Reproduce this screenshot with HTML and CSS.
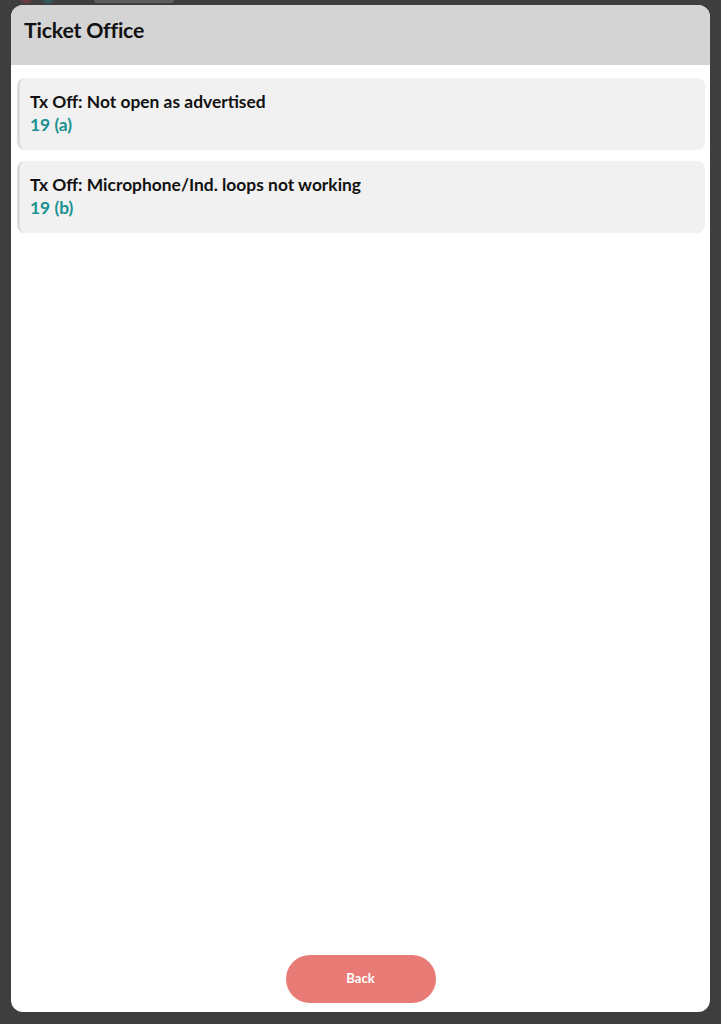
FILE: index.html
```html
<!DOCTYPE html>
<html>
<head>
<meta charset="utf-8">
<link rel="stylesheet" href="styles.css">
</head>
<body>
<div class="backdrop-peek">
  <span class="peek-dot red"></span>
  <span class="peek-dot teal"></span>
  <span class="peek-bar"></span>
</div>
<div class="modal">
  <div class="modal-header">
    <h1 class="modal-title">Ticket Office</h1>
  </div>
  <div class="modal-body">
    <div class="item-card">
      <div class="item-title">Tx Off: Not open as advertised</div>
      <div class="item-code">19 (a)</div>
    </div>
    <div class="item-card">
      <div class="item-title">Tx Off: Microphone/Ind. loops not working</div>
      <div class="item-code">19 (b)</div>
    </div>
  </div>
  <div class="modal-footer">
    <button class="back-btn">Back</button>
  </div>
</div>
</body>
</html>
```
FILE: styles.css
```css
* { box-sizing: border-box; }
html, body { margin: 0; padding: 0; }
body {
  background: #3e3e3e;
  font-family: Lato, "Open Sans", sans-serif;
  height: 1024px;
  overflow: hidden;
  position: relative;
  padding: 5px 11px 12px 11px;
}
.backdrop-peek {
  position: absolute;
  top: -8px;
  left: 20px;
  display: flex;
  align-items: center;
  gap: 30px;
  opacity: 0.3;
}
.peek-dot { width: 12px; height: 12px; border-radius: 50%; }
.peek-dot.red { background: #c0394a; }
.peek-dot.teal { background: #1a8f8f; margin-left: -20px; }
.peek-bar { width: 80px; height: 10px; border-radius: 3px; background: #aaa; margin-left: 10px; }
.modal {
  position: relative;
  background: #ffffff;
  border-radius: 12px;
  height: 1007px;
  display: flex;
  flex-direction: column;
  overflow: hidden;
}
.modal-header {
  background: #d4d4d4;
  height: 60px;
  padding: 12px 0 0 13px;
}
.modal-title {
  margin: 0;
  font-size: 21.3px;
  line-height: 26px;
  font-weight: 700;
  color: #111;
  letter-spacing: -0.2px;
}
.modal-body {
  flex: 1;
  padding: 13px 5px 0 6px;
  display: flex;
  flex-direction: column;
  gap: 11px;
}
.item-card {
  background: #f1f1f1;
  border-left: 3px solid #dcdcdc;
  border-radius: 8px;
  height: 72px;
  padding: 12px 0 0 10px;
}
.item-title {
  font-size: 17.4px;
  font-weight: 700;
  color: #111;
  line-height: 23px;
}
.item-code {
  font-size: 17.4px;
  font-weight: 700;
  color: #1b9191;
  line-height: 23px;
}
.modal-footer {
  display: flex;
  justify-content: center;
  padding-bottom: 9px;
}
.back-btn {
  width: 150px;
  height: 48px;
  border: none;
  border-radius: 24px;
  background: #e97b77;
  color: #fff;
  font-family: Lato, "Open Sans", sans-serif;
  font-size: 13px;
  font-weight: 700;
  padding: 0 0 2px 0;
}
```
